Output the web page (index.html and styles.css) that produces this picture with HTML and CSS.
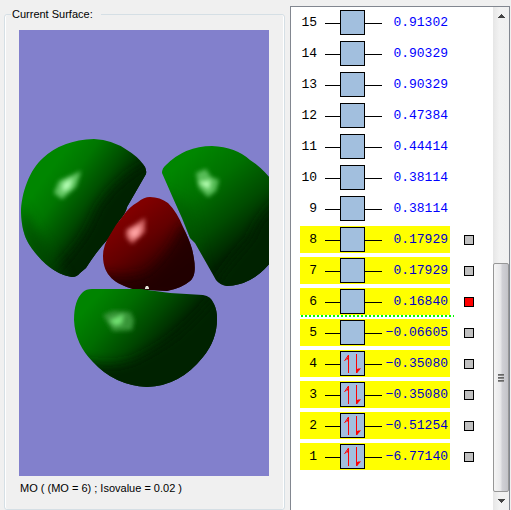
FILE: index.html
```html
<!DOCTYPE html>
<html lang="en">
<head>
<meta charset="utf-8">
<title>Molecular Orbitals</title>
<link rel="stylesheet" href="styles.css">
</head>
<body>
<main class="editor">
  <fieldset class="surface">
    <legend>Current Surface:</legend>
    <svg class="view" viewBox="19 30 250 446" role="img" aria-label="Orbital surface">
      <defs>
        <linearGradient id="g1" gradientUnits="userSpaceOnUse" x1="52" y1="168" x2="110" y2="211">
          <stop offset="0" stop-color="#008600"/><stop offset=".3" stop-color="#007600"/><stop offset=".65" stop-color="#005000"/><stop offset="1" stop-color="#002300"/>
        </linearGradient>
        <linearGradient id="g2" gradientUnits="userSpaceOnUse" x1="185" y1="160" x2="249" y2="239">
          <stop offset="0" stop-color="#008600"/><stop offset=".35" stop-color="#007000"/><stop offset=".7" stop-color="#004c00"/><stop offset="1" stop-color="#002300"/>
        </linearGradient>
        <linearGradient id="g3" gradientUnits="userSpaceOnUse" x1="100" y1="293" x2="161" y2="348">
          <stop offset="0" stop-color="#008400"/><stop offset=".35" stop-color="#006c00"/><stop offset=".7" stop-color="#004800"/><stop offset="1" stop-color="#002300"/>
        </linearGradient>
        <linearGradient id="g4" gradientUnits="userSpaceOnUse" x1="129" y1="213" x2="174" y2="275">
          <stop offset="0" stop-color="#800000"/><stop offset=".4" stop-color="#640000"/><stop offset=".75" stop-color="#400000"/><stop offset="1" stop-color="#260000"/>
        </linearGradient>
        <clipPath id="c1"><path d="M146 174Q147 169 143 164Q137 156 127 150Q113 140 94 139Q62 140 43 158C30 169 21 193 21 213C22 234 27 243 37 255Q53 274 72 277Q77 277 80 273L86 268Q96 252 108 239L119 221Q126 213 127 207Z"/></clipPath>
        <clipPath id="c2"><path d="M162 173Q162 168 166 165Q185 146 212 146Q236 147 250 160Q261 167 270 178V263Q252 285 227 286Q220 285 216 280L195 243L190 238L182 218L173 198Z"/></clipPath>
        <clipPath id="c3"><path d="M83 292Q86 289 92 289L140 289L170 293L203 295Q211 296 214 304Q217 310 217 319Q217 340 203 357Q180 386 147 387Q114 385 93 362Q75 344 74 320Q74 300 83 292Z"/></clipPath>
        <clipPath id="c4"><path d="M150 197Q144 197 138 202Q129 207 123 216Q115 225 110 235Q103 245 103 256C103 276 116 284 133 289L167 291Q182 288 190 281C197 275 195 262 192 249Q189 239 183 227Q177 212 168 203Q160 197 150 197Z"/></clipPath>
        <filter id="soft" x="-50%" y="-50%" width="200%" height="200%"><feGaussianBlur stdDeviation="2"/></filter>
        <filter id="wide" x="-50%" y="-50%" width="200%" height="200%"><feGaussianBlur stdDeviation="6"/></filter>
      </defs>
      <rect x="19" y="30" width="250" height="446" fill="#8280cc"/>
      <g clip-path="url(#c1)">
        <rect x="19" y="130" width="140" height="160" fill="url(#g1)"/>
        <path d="M40 285Q85 245 97 210Q118 175 160 158V290Z" fill="#002300" filter="url(#wide)"/>
        <path d="M20 205L22 240L45 275L70 285L50 250Z" fill="#004400" opacity=".65" filter="url(#wide)"/>
        <path d="M59 181L81 171L76 187L62 199L54 193Z" fill="#61c561" filter="url(#soft)"/>
        <path d="M63 183L73 178L70 188L62 192Z" fill="#b4ffb4" filter="url(#soft)"/>
      </g>
      <g clip-path="url(#c2)">
        <rect x="160" y="140" width="110" height="150" fill="url(#g2)"/>
        <path d="M280 198Q256 220 251 239Q233 257 216 282V300H280Z" fill="#002300" filter="url(#wide)"/>
        <path d="M160 190L190 205L202 262L214 290Z" fill="#005000" opacity=".35" filter="url(#wide)"/>
        <path d="M196 173L206 169L211 177L219 180L216 191L208 197L199 188Z" fill="#58bd58" filter="url(#soft)"/>
        <path d="M198 182L211 180L209 190Z" fill="#b4ffb0" filter="url(#soft)"/>
      </g>
      <g clip-path="url(#c4)">
        <rect x="100" y="195" width="100" height="100" fill="url(#g4)"/>
        <path d="M98 273Q125 281 148 272Q170 253 182 225L206 230V300H98Z" fill="#220000" opacity=".85" filter="url(#wide)"/>
        <path d="M126 230L145 218L145 232L132 244L126 237Z" fill="#ce6060" filter="url(#soft)"/>
        <path d="M129 231L141 225L139 235L132 239Z" fill="#ffa4a4" filter="url(#soft)"/>
      </g>
      <g clip-path="url(#c3)">
        <rect x="70" y="285" width="150" height="105" fill="url(#g3)"/>
        <path d="M76 360Q120 372 145 355Q185 335 216 294L230 300V395H76Z" fill="#002300" filter="url(#wide)"/>
        <path d="M103 315L113 311L130 312L134 320L132 330L113 331Z" fill="#389538" filter="url(#soft)"/>
        <path d="M109 320L124 314L122 324L115 326Z" fill="#71df71" filter="url(#soft)"/>
      </g>
      <path d="M145 288L146 286H148L149 288V289H145Z" fill="#e4e4d8"/>
    </svg>
    <p class="caption">MO ( (MO = 6) ; Isovalue = 0.02 )</p>
  </fieldset>

  <section class="orbitals" aria-label="Orbital energies">
    <ul class="levels" id="levels"></ul>
    <div class="scrollbar">
      <button type="button" class="arrow" aria-label="Scroll up"><svg viewBox="0 0 7 4"><path d="M3 0h1v1h1v1h1v1h1v1H0V3h1V2h1V1h1z"/></svg></button>
      <div class="track"><div class="thumb"><i></i><i></i><i></i></div></div>
      <button type="button" class="arrow" aria-label="Scroll down"><svg viewBox="0 0 7 4"><path d="M0 0h7v1H6v1H5v1H4v1H3V3H2V2H1V1H0z"/></svg></button>
    </div>
  </section>
</main>
<script src="levels.js"></script>
</body>
</html>
```
FILE: styles.css
```css
* { box-sizing: border-box; }
body {
  margin: 0;
  background: #f0f0f0;
  color: #000;
  font: 11px/16px "Liberation Sans", Arial, sans-serif;
}
.editor {
  display: grid;
  grid-template-columns: minmax(0, 281fr) minmax(0, 220fr);
  gap: 5px;
  min-height: 100vh;
  padding: 6px 1px 0 4px;
}
.surface {
  min-width: 0;
  margin: 0;
  padding: 8px 15px 8px 14px;
  border: 1px solid #d5dfe5;
  border-radius: 3px;
  box-shadow: inset 1px 0 #fff, inset -1px 0 #fff;
}
.surface legend {
  margin-left: -8px;
  padding: 0 8px 0 1px;
}
.view { display: block; width: 100%; }
.caption { margin: 4px 0 0 1px; white-space: nowrap; }

.orbitals {
  min-width: 0;
  display: flex;
  background: #fff;
  border: 1px solid #828790;
  border-bottom: 0;
}
.levels {
  flex: 1;
  display: grid;
  align-content: start;
  gap: 4px;
  margin: 0;
  padding: 2px 9px 0;
  list-style: none;
  font: 13px/27px "Liberation Mono", monospace;
}
.level {
  position: relative;
  display: grid;
  grid-template-columns: 150px 10px;
  gap: 14px;
  align-items: center;
}
.bar {
  display: grid;
  grid-template-columns: 17px 8px 15px 25px 17px 1fr;
  align-items: center;
  height: 27px;
  padding-right: 2px;
}
.active .bar { background: #ff0; }
.index { text-align: right; }
.wire { height: 1px; margin-top: 2px; background: #000; }
.index + .wire { grid-column: 3; }
.box {
  grid-column: 4;
  display: block;
  width: 25px;
  height: 25px;
  background: #a2bfde;
  border: 1px solid #000;
}
.energy { color: #00f; justify-self: end; white-space: nowrap; }
.active .energy { color: #0000c8; }
.pick {
  appearance: none;
  width: 10px;
  height: 10px;
  margin: 0;
  border: 1px solid #000;
  background: #c0c0c0;
}
.pick:checked { background: #f00; }
.fermi::after {
  content: "";
  position: absolute;
  left: 1px;
  top: 27px;
  width: 153px;
  height: 2px;
  background: repeating-linear-gradient(90deg, #0f0 0 2px, #fff 2px 4px);
}

.scrollbar {
  display: flex;
  flex-direction: column;
  width: 16px;
  background: linear-gradient(90deg, #e6e6e6, #f2f2f2 40%, #f0f0f0);
}
.arrow {
  display: grid;
  place-items: center;
  height: 18px;
  padding: 0;
  border: 0;
  background: none;
}
.arrow svg { width: 7px; height: 4px; fill: #444; }
.track {
  flex: 1;
  display: flex;
  flex-direction: column;
  justify-content: flex-end;
}
.thumb {
  display: flex;
  flex-direction: column;
  justify-content: center;
  align-items: center;
  gap: 1px;
  height: 49%;
  border: 1px solid #979797;
  border-radius: 2px;
  background: linear-gradient(90deg, #f5f5f5, #e9e9eb 45%, #d0d0d5 60%, #c3c3c8);
}
.thumb i { width: 6px; height: 2px; background: linear-gradient(#555, #999); }
```
FILE: levels.js
```js
const levels = [
  [15, "0.91302"], [14, "0.90329"], [13, "0.90329"], [12, "0.47384"],
  [11, "0.44414"], [10, "0.38114"], [9, "0.38114"], [8, "0.17929"],
  [7, "0.17929"], [6, "0.16840"], [5, "−0.06605"], [4, "−0.35080"],
  [3, "−0.35080"], [2, "−0.51254"], [1, "−6.77140"]
];
const spins = '<path d="M8.500 22V4L4.500 10M16.500 3V22L20.500 17.500" fill="none" stroke="#f00"/><path d="M9 4v4l-3 1zM17 22v-4l3-1z" fill="#f00"/>';

document.getElementById("levels").innerHTML = levels.map(([n, energy]) => {
  const active = n <= 8;
  return `<li class="level${active ? " active" : ""}${n === 6 ? " fermi" : ""}">
    <label class="bar" for="mo${n}">
      <span class="index">${n}</span><span class="wire"></span>
      <svg class="box" viewBox="1 1 23 23">${n <= 4 ? spins : ""}</svg>
      <span class="wire"></span><span class="energy">${energy}</span>
    </label>
    ${active ? `<input class="pick" type="checkbox" id="mo${n}"${n === 6 ? " checked" : ""}>` : ""}
  </li>`;
}).join("");
```
